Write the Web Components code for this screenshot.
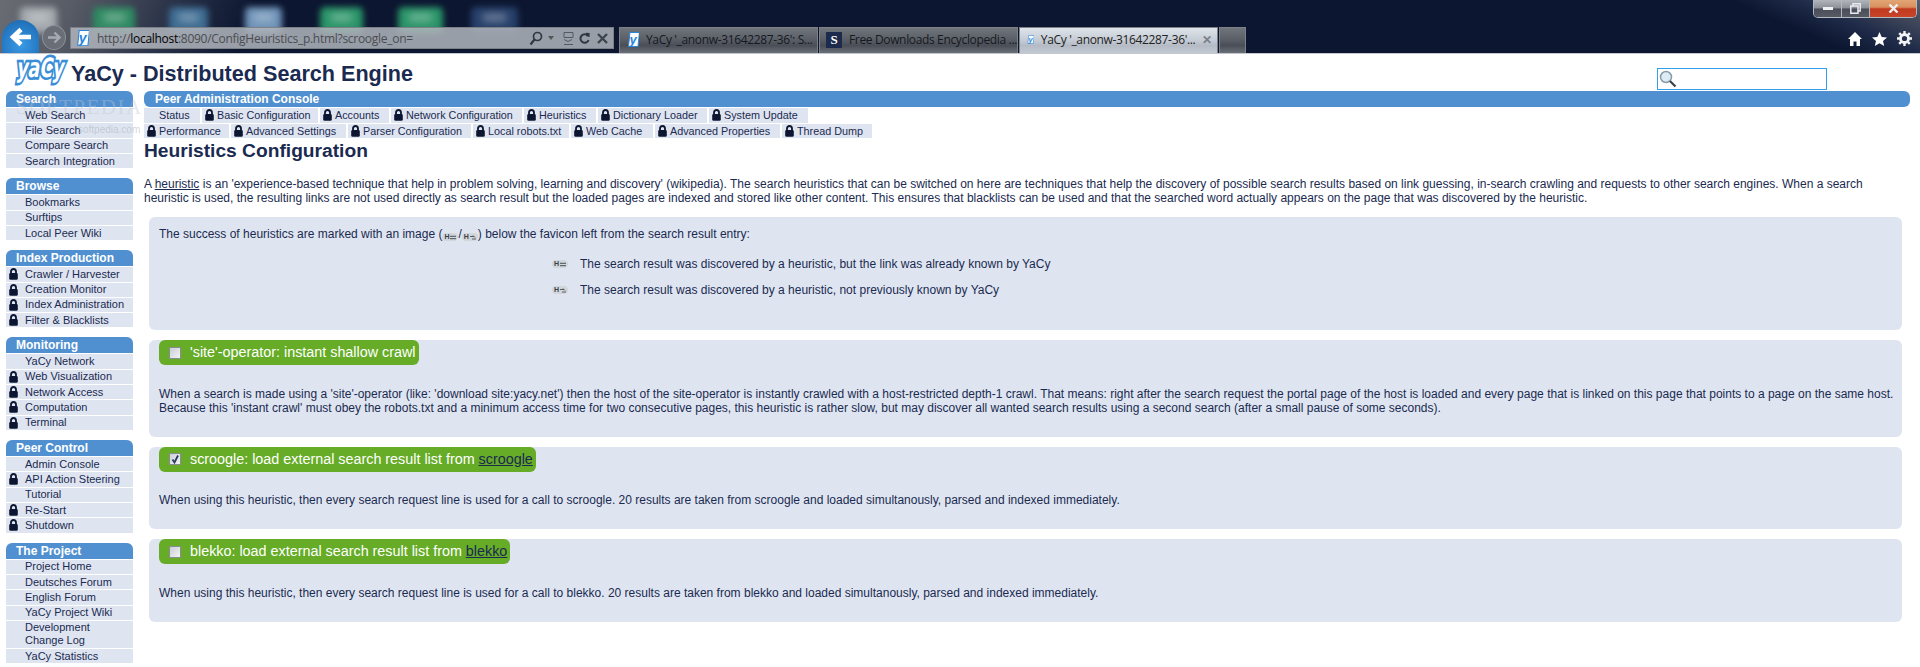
<!DOCTYPE html>
<html>
<head>
  <title>YaCy - Heuristics Configuration</title>
  <style type="text/css">
    html, body { margin: 0; padding: 0; background: #fff; }
    body { font-family: "Liberation Sans", Arial, sans-serif; font-size: 11px; color: #1a2a50; overflow: hidden; height: 667px; }
    .page { display: flex; gap: 11px; padding: 0 10px 0 6px; }
    .main { flex: 1; min-width: 0; }
  </style>
</head>
<body>
  <browser-chrome></browser-chrome>
  <site-header></site-header>
  <div class="page">
    <side-menu>
      <menu-group title="Search">
        <menu-item>Web Search</menu-item>
        <menu-item>File Search</menu-item>
        <menu-item>Compare Search</menu-item>
        <menu-item>Search Integration</menu-item>
      </menu-group>
      <menu-group title="Browse">
        <menu-item>Bookmarks</menu-item>
        <menu-item>Surftips</menu-item>
        <menu-item>Local Peer Wiki</menu-item>
      </menu-group>
      <menu-group title="Index Production">
        <menu-item locked>Crawler / Harvester</menu-item>
        <menu-item locked>Creation Monitor</menu-item>
        <menu-item locked>Index Administration</menu-item>
        <menu-item locked>Filter &amp; Blacklists</menu-item>
      </menu-group>
      <menu-group title="Monitoring">
        <menu-item>YaCy Network</menu-item>
        <menu-item locked>Web Visualization</menu-item>
        <menu-item locked>Network Access</menu-item>
        <menu-item locked>Computation</menu-item>
        <menu-item locked>Terminal</menu-item>
      </menu-group>
      <menu-group title="Peer Control">
        <menu-item>Admin Console</menu-item>
        <menu-item locked>API Action Steering</menu-item>
        <menu-item>Tutorial</menu-item>
        <menu-item locked>Re-Start</menu-item>
        <menu-item locked>Shutdown</menu-item>
      </menu-group>
      <menu-group title="The Project">
        <menu-item>Project Home</menu-item>
        <menu-item>Deutsches Forum</menu-item>
        <menu-item>English Forum</menu-item>
        <menu-item>YaCy Project Wiki</menu-item>
        <menu-item>Development<br>Change Log</menu-item>
        <menu-item>YaCy Statistics</menu-item>
      </menu-group>
    </side-menu>
    <div class="main">
      <admin-tabs title="Peer Administration Console">
        <tab-row>
          <admin-tab width="56">Status</admin-tab>
          <admin-tab locked width="116">Basic Configuration</admin-tab>
          <admin-tab locked width="69">Accounts</admin-tab>
          <admin-tab locked width="131">Network Configuration</admin-tab>
          <admin-tab locked width="72">Heuristics</admin-tab>
          <admin-tab locked width="109">Dictionary Loader</admin-tab>
          <admin-tab locked width="99">System Update</admin-tab>
        </tab-row>
        <tab-row>
          <admin-tab locked width="85">Performance</admin-tab>
          <admin-tab locked width="115">Advanced Settings</admin-tab>
          <admin-tab locked width="123">Parser Configuration</admin-tab>
          <admin-tab locked width="96">Local robots.txt</admin-tab>
          <admin-tab locked width="82">Web Cache</admin-tab>
          <admin-tab locked width="125">Advanced Properties</admin-tab>
          <admin-tab locked width="90">Thread Dump</admin-tab>
        </tab-row>
      </admin-tabs>
      <heuristics-intro></heuristics-intro>
      <info-box></info-box>
      <heuristic-box label="'site'-operator: instant shallow crawl">
        When a search is made using a 'site'-operator (like: 'download site:yacy.net') then the host of the site-operator is instantly crawled with a host-restricted depth-1 crawl. That means: right after the search request the portal page of the host is loaded and every page that is linked on this page that points to a page on the same host.<br>Because this 'instant crawl' must obey the robots.txt and a minimum access time for two consecutive pages, this heuristic is rather slow, but may discover all wanted search results using a second search (after a small pause of some seconds).
      </heuristic-box>
      <heuristic-box checked label="scroogle: load external search result list from " link="scroogle">
        When using this heuristic, then every search request line is used for a call to scroogle. 20 results are taken from scroogle and loaded simultanously, parsed and indexed immediately.
      </heuristic-box>
      <heuristic-box label="blekko: load external search result list from " link="blekko">
        When using this heuristic, then every search request line is used for a call to blekko. 20 results are taken from blekko and loaded simultanously, parsed and indexed immediately.
      </heuristic-box>
    </div>
  </div>
  <water-mark></water-mark>

  <script>
  (function() {
    'use strict';

    const LOCK = `<svg width="9" height="12" viewBox="0 0 9 12"><path d="M2 6V3.600C2 2 3 1 4.500 1S7 2 7 3.600V6" fill="none" stroke="#0c1630" stroke-width="1.800"/><rect x="0.200" y="5" width="8.600" height="6.800" rx="1.400" fill="#0c1630"/></svg>`;

    function favicon(size) {
      return `<svg width="${size}" height="${size * 1.25}" viewBox="0 0 12 15"><rect x="1.500" y="0.500" width="9.500" height="14" transform="skewX(-6) translate(1.500 0)" fill="#fff" stroke="#2a86d8"/><text x="6" y="12" text-anchor="middle" font-family="Liberation Sans" font-weight="bold" font-style="italic" font-size="13" fill="#2a86d8">y</text></svg>`;
    }

    function define(name, css, html) {
      customElements.define(name, class extends HTMLElement {
        constructor() {
          super();
          let shadowRoot = this.attachShadow({mode: 'open'});
          shadowRoot.innerHTML = `<style>${css}</style>` + (typeof html === 'function' ? html(this) : html);
        }
      });
    }

    class BrowserTab extends HTMLElement {
      constructor() {
        super();
        let shadowRoot = this.attachShadow({mode: 'open'});
        let icon = this.getAttribute('icon') === 's'
          ? `<span class="s">S</span>`
          : favicon(12);
        shadowRoot.innerHTML = `
          <style>
            :host { display: flex; align-items: center; width: 199px; height: 26px; box-sizing: border-box;
              padding: 0 0 2px 7px; gap: 7px; margin-right: 1px; font: 12px "Open Sans", "Liberation Sans", sans-serif; color: #15191f;
              background: linear-gradient(#70757c, #5b6068 45%, #4a4e56 70%, #6a6e76);
              border: 1px solid #7c8087; border-bottom: 0; white-space: nowrap; overflow: hidden; letter-spacing: -.35px; }
            :host([active]) { background: linear-gradient(#dfe4ea, #c4cbd4 50%, #b5bbc4 70%, #c3c9d2); color: #222; }
            .s { width: 16px; height: 16px; background: #1d2a4c; color: #fff; font: bold 13px "Liberation Serif", serif; text-align: center; line-height: 16px; flex: none; margin-left: -1px; }
            .x { margin-left: auto; margin-right: 5px; color: #78808a; font: bold 12px "Liberation Sans", sans-serif; }
          </style>
          ${icon}<slot></slot>${this.hasAttribute('active') ? '<span class="x">✕</span>' : ''}`;
      }
    }
    customElements.define('browser-tab', BrowserTab);

    define('browser-chrome', `
      :host { display: block; position: relative; height: 54px; box-sizing: border-box; border-bottom: 1px solid #c4c8d0; overflow: hidden;
        background:
          linear-gradient(23deg, rgba(90,94,104,0) 724px, rgba(30,42,72,1) 750px, #5c6069 800px),
          linear-gradient(112deg, #696c73 0, #575b65 70px, #2b3349 160px, rgba(12,22,48,0) 240px),
          #0c1630; }
      .blurs i { position: absolute; top: 7px; height: 26px; border-radius: 5px; filter: blur(3px); }
      .blurs i::after { content: ""; position: absolute; left: 25%; right: 25%; top: 6px; height: 9px; background: rgba(255,255,255,.28); filter: blur(2px); }
      .bar { position: absolute; left: 0; right: 0; bottom: 0; height: 33px; display: flex; align-items: flex-end; }
      .back { width: 37px; height: 33px; margin: 0 3px 0 2px; border-radius: 50% 50% 0 0 / 55% 55% 0 0; background: radial-gradient(circle at 50% 75%, #3a9ae6, #1a66ae 95%); display: flex; align-items: center; justify-content: center; }
      .fwd { width: 24px; height: 25px; margin: 0 4px 3px 0; border-radius: 50%; background: #6a6f77; border: 1px solid #8d9299; box-sizing: border-box; display: flex; align-items: center; justify-content: center; }
      .addr { width: 544px; height: 22px; margin: 0 5px 4px 0; background: rgba(176,180,188,.86); box-sizing: border-box; border: 1px solid #7c8087; display: flex; align-items: center; padding: 0 5px; font: 12px "Open Sans", "Liberation Sans", sans-serif; color: #4a4d52; letter-spacing: -.28px; }
      .addr b { font-weight: 400; color: #000; }
      .addr .url { margin-left: 8px; flex: 1; white-space: nowrap; }
      .tools { display: flex; gap: 5px; align-items: center; }
      .tabs { display: flex; align-items: flex-end; height: 26px; }
      .plus { width: 27px; height: 26px; box-sizing: border-box; border: 1px solid #7c8087; border-bottom: 0; background: linear-gradient(#70757c, #5b6068 45%, #4a4e56 70%, #6a6e76); }
      .win { position: absolute; top: -1px; right: 3px; width: 104px; height: 19px; display: flex; box-sizing: border-box; border: 1px solid #b4b8bf; border-top: 0; border-radius: 0 0 5px 5px; overflow: hidden; }
      .win span { display: flex; align-items: center; justify-content: center; background: linear-gradient(#b6bac0, #8b8f97 50%, #4a4e58 55%, #565a64); border-right: 1px solid #b4b8bf; width: 28px; box-sizing: border-box; }
      .win span.close { flex: 1; border: 0; background: linear-gradient(#e4a878, #d89060 45%, #c03a1e 55%, #c8452a); }
      .right { position: absolute; top: 31px; left: 1848px; display: flex; gap: 10px; align-items: center; }
    `, `
      <div class="blurs">
        <i style="left:20px;width:37px;background:#a2a8ad"></i>
        <i style="left:93px;width:42px;background:#2f8a62"></i>
        <i style="left:169px;width:39px;background:#3e6c92"></i>
        <i style="left:245px;width:37px;background:#6f93b8"></i>
        <i style="left:320px;width:43px;background:#2a9468"></i>
        <i style="left:398px;width:45px;background:#2a9468"></i>
        <i style="left:471px;width:47px;background:#27406a"></i>
      </div>
      <div class="bar">
        <div class="back"><svg width="24" height="20" viewBox="0 0 24 20"><path d="M22 10H5M12 2.500L4 10l8 7.500" fill="none" stroke="#fff" stroke-width="4.500"/></svg></div>
        <div class="fwd"><svg width="15" height="13" viewBox="0 0 15 13"><path d="M1 6.500h11M7.500 1.500l5 5-5 5" fill="none" stroke="#a6abb2" stroke-width="2.400"/></svg></div>
        <div class="addr">
          ${favicon(13)}
          <span class="url">http://<b>localhost</b>:8090/ConfigHeuristics_p.html?scroogle_on=</span>
          <span class="tools">
            <svg width="14" height="15" viewBox="0 0 14 15"><circle cx="8.500" cy="5.500" r="4" fill="none" stroke="#33373d" stroke-width="1.700"/><path d="M5.500 8.500L1.500 13.500" stroke="#33373d" stroke-width="2.200"/></svg>
            <svg width="6" height="4" viewBox="0 0 6 4"><path d="M0 0h6L3 4z" fill="#555"/></svg>
            <svg width="11" height="13" viewBox="0 0 11 13" style="margin-left:4px"><path d="M1 .5h9v5H1zM1 7.500l4 2 4-2M1 12.500h9" fill="none" stroke="#55595f"/></svg>
            <svg width="11" height="13" viewBox="0 0 11 13"><path d="M9 4A4.200 4.200 0 1 0 9.600 8" fill="none" stroke="#33373d" stroke-width="2"/><path d="M7 .8L10.600 1v4L7 4z" fill="#33373d"/></svg>
            <svg width="11" height="11" viewBox="0 0 11 11" style="margin-left:2px"><path d="M1 1l9 9M10 1l-9 9" stroke="#40444a" stroke-width="2.400"/></svg>
          </span>
        </div>
        <div class="tabs">
          <browser-tab>YaCy '_anonw-31642287-36': S...</browser-tab>
          <browser-tab icon="s">Free Downloads Encyclopedia ...</browser-tab>
          <browser-tab active>YaCy '_anonw-31642287-36'...</browser-tab>
          <div class="plus"></div>
        </div>
      </div>
      <div class="win">
        <span><svg width="10" height="3"><rect width="10" height="3" fill="#eef0f2"/></svg></span>
        <span><svg width="11" height="11" viewBox="0 0 11 11"><path d="M3 3V.8h7.200V8H8M.8 3h7.200v7.200H.8z" fill="none" stroke="#e8eaee" stroke-width="1.500"/></svg></span>
        <span class="close"><svg width="11" height="9" viewBox="0 0 11 9"><path d="M1.500 .5l8 8M9.500 .5l-8 8" stroke="#eceef0" stroke-width="2.400"/></svg></span>
      </div>
      <div class="right">
        <svg width="14" height="14" viewBox="0 0 14 14"><path d="M7 0L0 7h2v7h3.500V9.500h3V14H12V7h2z" fill="#fff"/></svg>
        <svg width="15" height="14" viewBox="0 0 15 14"><path d="M7.500 0l2.200 4.900 5.300.5-4 3.500 1.200 5.100-4.700-2.700L2.800 14 4 8.900 0 5.400l5.300-.5z" fill="#fff"/></svg>
        <svg width="15" height="15" viewBox="0 0 15 15"><circle cx="7.500" cy="7.500" r="4" fill="none" stroke="#f2f3f5" stroke-width="2.800"/><path d="M7.500 0v3M7.500 12v3M0 7.500h3M12 7.500h3M2.200 2.200l2 2M10.800 10.800l2 2M12.800 2.200l-2 2M4.200 10.800l-2 2" stroke="#f2f3f5" stroke-width="2.400"/></svg>
      </div>
    `);

    define('site-header', `
      :host { display: flex; align-items: flex-start; height: 37px; padding-left: 8px; position: relative; }
      .logo { flex: none; margin: 2px 5px 0 0; overflow: visible; }
      h1 { margin: 8px 0 0; font: bold 21.600px/24px "Liberation Sans", sans-serif; color: #1a2a50; flex: 1; white-space: nowrap; }
      .search { flex: none; width: 170px; height: 22px; box-sizing: border-box; border: 1px solid #2f9fee; margin: 14px 93px 0 0; display: flex; align-items: center; padding-left: 1px; background: #fff; }
    `, `
      <svg class="logo" width="58" height="34" viewBox="0 0 58 34">
        <text transform="translate(8 21) skewX(-10) scale(1 1.400)" font-family="DejaVu Sans" font-weight="bold" font-size="19" textLength="47" lengthAdjust="spacingAndGlyphs" fill="#fff" stroke="#3a8ed8" stroke-width="3.800" paint-order="stroke" stroke-linejoin="miter">yaCy</text>
      </svg>
      <h1>YaCy - Distributed Search Engine</h1>
      <div class="search">
        <svg width="18" height="18" viewBox="0 0 18 18"><circle cx="7" cy="7" r="5.500" fill="#dcecf4" stroke="#8b9aa6" stroke-width="1.500"/><path d="M11 11l5.500 5.500" stroke="#39424c" stroke-width="2.200"/></svg>
      </div>
    `);

    define('side-menu', `
      :host { display: flex; flex-direction: column; gap: 10px; width: 127px; flex: none; }
    `, `<slot></slot>`);

    define('menu-group', `
      :host { display: flex; flex-direction: column; gap: 1px; }
      .head { height: 16px; background: #5090d0; border-radius: 6px 6px 0 0; color: #fff; font: bold 12px/16px "Liberation Sans", sans-serif; padding-left: 10px; }
    `, el => `<div class="head">${el.getAttribute('title')}</div><slot></slot>`);

    define('menu-item', `
      :host { display: block; position: relative; background: #dfe5f0; padding: .67px 0 .67px 19px; font: 11px/13px "Liberation Sans", sans-serif; color: #1a2a50; }
      svg { position: absolute; left: 3px; top: 1px; }
    `, el => (el.hasAttribute('locked') ? LOCK : '') + `<slot></slot>`);

    define('admin-tabs', `
      :host { display: flex; flex-direction: column; gap: 1px; }
      .head { height: 16px; background: #5090d0; border-radius: 6px; color: #fff; font: bold 12px/16px "Liberation Sans", sans-serif; padding-left: 11px; }
    `, el => `<div class="head">${el.getAttribute('title')}</div><slot></slot>`);

    define('tab-row', `
      :host { display: flex; gap: 2px; }
    `, `<slot></slot>`);

    class AdminTab extends HTMLElement {
      constructor() {
        super();
        let shadowRoot = this.attachShadow({mode: 'open'});
        shadowRoot.innerHTML = `
          <style>
            :host { display: flex; align-items: center; box-sizing: border-box; height: 14.500px; background: #dfe5f0; padding-left: 3px; gap: 3px; font: 10.800px/14px "Liberation Sans", sans-serif; color: #1a2a50; white-space: nowrap; width: ${this.getAttribute('width')}px; }
            .sp { width: 9px; flex: none; }
          </style>
          ${this.hasAttribute('locked') ? LOCK : '<span class="sp"></span>'}<slot></slot>`;
      }
    }
    customElements.define('admin-tab', AdminTab);

    define('heuristics-intro', `
      :host { display: block; }
      h2 { margin: 0; padding-top: 2px; height: 35px; box-sizing: border-box; font: bold 19.200px/22px "Liberation Sans", sans-serif; color: #1a2a50; }
      p { margin: 4px 0 12px; font: 12px/14px "Liberation Sans", sans-serif; color: #1a2a50; }
      a { color: inherit; }
    `, `
      <h2>Heuristics Configuration</h2>
      <p>A <a href="#">heuristic</a> is an 'experience-based technique that help in problem solving, learning and discovery' (wikipedia). The search heuristics that can be switched on here are techniques that help the discovery of possible search results based on link guessing, in-search crawling and requests to other search engines. When a search<br>heuristic is used, the resulting links are not used directly as search result but the loaded pages are indexed and stored like other content. This ensures that blacklists can be used and that the searched word actually appears on the page that was discovered by the heuristic.</p>
    `);

    define('h-badge', `
      :host { display: inline-flex; align-items: center; justify-content: center; gap: 1px; width: 16px; height: 8px; border-radius: 4px; background: #d2d6db; font: bold 7px/8px "Liberation Sans", sans-serif; color: #3a3f48; vertical-align: -1px; }
    `, el => `H<svg width="6" height="5" viewBox="0 0 6 5">${el.hasAttribute('new')
      ? '<path d="M0 1.500h4M2 4h4M3 .5l2 2" stroke="#3a3f48" stroke-width=".8" fill="none"/>'
      : '<path d="M0 1.300h6M0 3.700h6" stroke="#3a3f48" stroke-width=".9"/>'}</svg>`);

    define('info-box', `
      :host { display: block; height: 113px; box-sizing: border-box; margin: 0 8px 10px 5px; padding: 10px 10px; background: #dfe5f0; border-radius: 6px; font: 12px/14px "Liberation Sans", sans-serif; color: #1a2a50; }
      .rows { margin-top: 10px; padding-left: 393px; }
      .row { display: flex; align-items: center; height: 26px; gap: 12px; }
    `, `
      <div>The success of heuristics are marked with an image (<h-badge></h-badge>/<h-badge new></h-badge>) below the favicon left from the search result entry:</div>
      <div class="rows">
        <div class="row"><h-badge></h-badge><span>The search result was discovered by a heuristic, but the link was already known by YaCy</span></div>
        <div class="row"><h-badge new></h-badge><span>The search result was discovered by a heuristic, not previously known by YaCy</span></div>
      </div>
    `);

    class HeuristicBox extends HTMLElement {
      constructor() {
        super();
        let shadowRoot = this.attachShadow({mode: 'open'});
        let link = this.getAttribute('link');
        let tick = this.hasAttribute('checked')
          ? '<path d="M3.500 6.500l2 3L9 2.500" fill="none" stroke="#2b3a66" stroke-width="1.800"/>' : '';
        shadowRoot.innerHTML = `
          <style>
            :host { display: block; margin: 0 8px 10px 5px; padding: 0 0 22px 10px; background: #dfe5f0; border-radius: 6px; font: 12px/14px "Liberation Sans", sans-serif; color: #1a2a50; }
            .legend { display: inline-flex; align-items: center; height: 25px; background: #66ac27; border-radius: 6px; padding: 0 3px 0 10px; gap: 9px; color: #fff; font: 14.350px/25px "Liberation Sans", sans-serif; vertical-align: top; white-space: pre; }
            .legend a { color: #1a2a50; }
            p { margin: 21.500px 0 0; }
          </style>
          <div class="legend">
            <svg width="12" height="12" viewBox="0 0 12 12"><defs><linearGradient id="g" x1="0" y1="0" x2="1" y2="1"><stop offset="0" stop-color="#c8ccd4"/><stop offset="1" stop-color="#f4f5f7"/></linearGradient></defs><rect x=".5" y=".5" width="11" height="11" fill="url(#g)" stroke="#8a8c92"/>${tick}</svg>
            <span>${this.getAttribute('label')}${link ? `<a href="#">${link}</a>` : ''}</span>
          </div>
          <p><slot></slot></p>`;
      }
    }
    customElements.define('heuristic-box', HeuristicBox);

    define('water-mark', `
      :host { position: absolute; left: 0; top: 0; pointer-events: none; }
      .a { position: absolute; left: 16px; top: 95px; font: 21px/24px "Liberation Serif", serif; letter-spacing: 1.500px; color: rgba(190,198,210,.4); white-space: nowrap; }
      .b { position: absolute; left: 78px; top: 124px; font: 10px/12px "Liberation Sans", sans-serif; color: rgba(170,178,190,.55); white-space: nowrap; }
    `, `<div class="a">SOFTPEDIA</div><div class="b">softpedia.com</div>`);

  })();
  </script>
</body>
</html>
